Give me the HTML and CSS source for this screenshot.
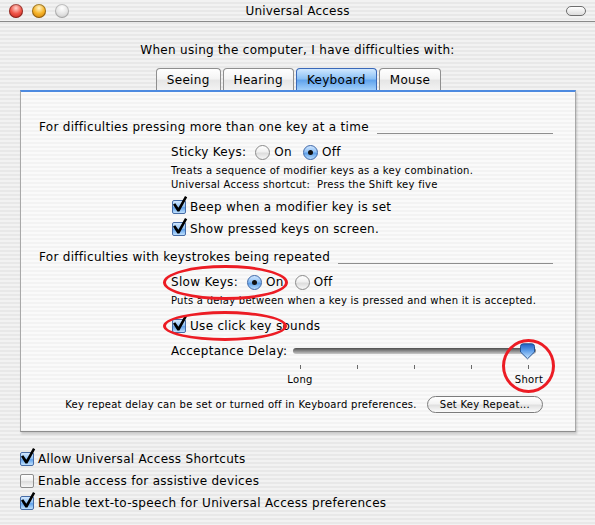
FILE: index.html
```html
<!DOCTYPE html>
<html>
<head>
<meta charset="utf-8">
<title>Universal Access</title>
<link rel="stylesheet" href="styles.css">
</head>
<body>
<div class="window">
  <div class="titlebar">
    <div class="lights">
      <span class="light red"></span>
      <span class="light yellow"></span>
      <span class="light off"></span>
    </div>
    <div class="title">Universal Access</div>
    <div class="pill-wrap"><span class="pill"></span></div>
  </div>

  <p class="intro">When using the computer, I have difficulties with:</p>

  <div class="tabs">
    <div class="tab">Seeing</div>
    <div class="tab">Hearing</div>
    <div class="tab selected">Keyboard</div>
    <div class="tab">Mouse</div>
  </div>

  <div class="panel">
    <div class="group-head"><span>For difficulties pressing more than one key at a time</span><span class="rule"></span></div>
    <div class="indent">
      <div class="opt radio-row first">
        <span class="rlabel">Sticky Keys:</span>
        <span class="rb"></span><span class="rtext">On</span>
        <span class="rb checked"></span><span class="rtext">Off</span>
      </div>
      <div class="note">Treats a sequence of modifier keys as a key combination.<br>Universal Access shortcut:&nbsp; Press the Shift key five</div>
      <div class="opt check-row beep"><span class="cb checked"><svg class="tick" viewBox="0 0 18 19"><path d="M2 9.4 L4.3 8.2 L7.4 12.8 L14 1 L16.2 2.2 L8.4 16.6 L6.4 16.6 Z"/></svg></span><span>Beep when a modifier key is set</span></div>
      <div class="opt check-row show"><span class="cb checked"><svg class="tick" viewBox="0 0 18 19"><path d="M2 9.4 L4.3 8.2 L7.4 12.8 L14 1 L16.2 2.2 L8.4 16.6 L6.4 16.6 Z"/></svg></span><span>Show pressed keys on screen.</span></div>
    </div>

    <div class="group-head second"><span>For difficulties with keystrokes being repeated</span><span class="rule"></span></div>
    <div class="indent">
      <div class="opt radio-row first">
        <span class="rlabel">Slow Keys:</span>
        <span class="rb checked"></span><span class="rtext">On</span>
        <span class="rb"></span><span class="rtext">Off</span>
      </div>
      <div class="note single">Puts a delay between when a key is pressed and when it is accepted.</div>
      <div class="opt check-row click"><span class="cb checked"><svg class="tick" viewBox="0 0 18 19"><path d="M2 9.4 L4.3 8.2 L7.4 12.8 L14 1 L16.2 2.2 L8.4 16.6 L6.4 16.6 Z"/></svg></span><span>Use click key sounds</span></div>
      <div class="acc-row">
        <span class="acc-label">Acceptance Delay:</span>
        <div class="slider">
          <div class="track"></div>
          <svg class="thumb" viewBox="0 0 17 17">
            <defs>
              <linearGradient id="tg" x1="0" y1="0" x2="0" y2="1">
                <stop offset="0" stop-color="#1f5fc4"/>
                <stop offset="0.45" stop-color="#5c9ce8"/>
                <stop offset="1" stop-color="#c8e6ff"/>
              </linearGradient>
            </defs>
            <path d="M1.5 3.5 Q1.5 0.8 4.2 0.8 H12.8 Q15.5 0.8 15.5 3.5 V9 L8.5 15.8 L1.5 9 Z" fill="url(#tg)" stroke="#24508f" stroke-width="1"/>
          </svg>
          <div class="ticks"><i></i><i></i><i></i><i></i><i></i></div>
          <div class="ends"><span>Long</span><span>Short</span></div>
        </div>
      </div>
    </div>
    <div class="repeat-row">
      <span class="small">Key repeat delay can be set or turned off in Keyboard preferences.</span>
      <span class="button">Set Key Repeat...</span>
    </div>
  </div>

  <div class="bottom">
    <div class="opt check-row"><span class="cb checked"><svg class="tick" viewBox="0 0 18 19"><path d="M2 9.4 L4.3 8.2 L7.4 12.8 L14 1 L16.2 2.2 L8.4 16.6 L6.4 16.6 Z"/></svg></span><span>Allow Universal Access Shortcuts</span></div>
    <div class="opt check-row"><span class="cb"></span><span>Enable access for assistive devices</span></div>
    <div class="opt check-row"><span class="cb checked"><svg class="tick" viewBox="0 0 18 19"><path d="M2 9.4 L4.3 8.2 L7.4 12.8 L14 1 L16.2 2.2 L8.4 16.6 L6.4 16.6 Z"/></svg></span><span>Enable text-to-speech for Universal Access preferences</span></div>
  </div>

  <span class="mark mark-slow"></span>
  <span class="mark mark-click"></span>
  <span class="mark mark-thumb"></span>
</div>
</body>
</html>
```

FILE: styles.css
```css
* { box-sizing: border-box; }
html, body { margin: 0; padding: 0; }
body {
  width: 595px;
  height: 525px;
  overflow: hidden;
  font-family: "DejaVu Sans", "Noto Sans", sans-serif;
  font-size: 12px;
  letter-spacing: 0.3px;
  color: #000;
  background: repeating-linear-gradient(to bottom, #f2f2f2 0, #f2f2f2 2px, #e8e8e8 2px, #e8e8e8 4px);
}
.window { position: relative; width: 595px; height: 525px; }

/* title bar */
.titlebar {
  height: 22px;
  display: grid;
  grid-template-columns: 1fr auto 1fr;
  align-items: center;
  border-bottom: 1px solid #8a8a8a;
}
.lights { display: flex; gap: 9px; padding-left: 9px; }
.light {
  width: 14px; height: 14px; border-radius: 50%;
  box-shadow: inset 0 0 0 1px rgba(0,0,0,0.35);
}
.light.red { background: radial-gradient(circle at 50% 30%, #ffd3cc 0, #f0564a 45%, #b8150d 100%); }
.light.yellow { background: radial-gradient(circle at 50% 30%, #fff4c8 0, #f7b52a 45%, #c26d00 100%); }
.light.off { background: radial-gradient(circle at 50% 30%, #ffffff 0, #e4e4e4 50%, #b8b8b8 100%); box-shadow: inset 0 0 0 1px rgba(0,0,0,0.2); }
.title { font-size: 12px; letter-spacing: 0.2px; }
.pill-wrap { display: flex; justify-content: flex-end; padding-right: 9px; }
.pill {
  width: 20px; height: 10px; border-radius: 5px;
  border: 1px solid #6e6e6e;
  background: linear-gradient(#ffffff, #dcdcdc);
}

.intro {
  margin: 20px 0 0;
  text-align: center;
  line-height: 16px;
}

/* tabs */
.tabs {
  margin-top: 10px;
  display: flex;
  justify-content: center;
  gap: 2px;
  padding-left: 2px;
}
.tab {
  height: 22px;
  padding: 0 10px;
  display: flex;
  align-items: center;
  border: 1px solid #8f8f8f;
  border-bottom: none;
  border-radius: 4px 4px 0 0;
  background: linear-gradient(#ffffff 0, #f4f4f4 45%, #e6e6e6 55%, #f2f2f2 100%);
}
.tab.selected {
  border-color: #3a68b8;
  background: linear-gradient(#d0e8ff 0, #8ec2f5 45%, #62a4ec 55%, #a2d0fb 100%);
}

/* panel */
.panel {
  margin: 0 19px 0 20px;
  padding: 27px 22px 18px 18px;
  border-top: 2px solid #4d8ae0;
  border-left: 1px solid #a8a8a8;
  border-right: 1px solid #a8a8a8;
  border-bottom: 1px solid #8d8d8d;
  box-shadow: 1px 2px 2px rgba(0,0,0,0.18);
  background: repeating-linear-gradient(to bottom, #fafafa 0, #fafafa 2px, #f3f3f3 2px, #f3f3f3 4px);
}
.group-head {
  display: flex;
  height: 16px;
  align-items: center;
  gap: 8px;
}
.group-head.second { margin-top: 11px; }
.group-head .rule {
  flex: 1;
  height: 1px;
  background: #8e8e8e;
  align-self: flex-end;
  margin-bottom: 1px;
}
.indent { margin-left: 132px; }

.opt { display: flex; align-items: center; height: 18px; }
.radio-row.first { margin-top: 8px; }
.rlabel { margin-right: 9px; }
.rb {
  width: 15px; height: 15px; border-radius: 50%;
  border: 1px solid #8a8a8a;
  background: linear-gradient(#ffffff 0, #f0f0f0 45%, #dddddd 55%, #f6f6f6 100%);
  display: inline-flex; align-items: center; justify-content: center;
  margin-right: 4px;
}
.rb.checked {
  border-color: #3f68a8;
  background: linear-gradient(#cfe6ff 0, #8fc0f4 45%, #5e9fe8 55%, #b8dcfc 100%);
}
.rb.checked::after {
  content: "";
  width: 5px; height: 5px; border-radius: 50%;
  background: #111;
}
.rtext { margin-right: 11px; }

.note {
  margin-top: 3px;
  font-size: 10px;
  letter-spacing: 0.27px;
  line-height: 14px;
}
.note.single { margin-top: 3px; }

.check-row .cb { margin-left: 1px; margin-right: 4px; }
.cb {
  position: relative;
  width: 14px; height: 14px;
  border-radius: 2px;
  border: 1px solid #8d8d8d;
  background: linear-gradient(#ffffff 0, #f0f0f0 45%, #dcdcdc 55%, #f7f7f7 100%);
  flex: none;
}
.cb.checked {
  border-color: #466ca6;
  background: linear-gradient(#d2e8ff 0, #92c3f5 45%, #62a2ea 55%, #bfe0fd 100%);
}
.tick {
  position: absolute;
  left: -2px; top: -6px;
  width: 18px; height: 19px;
  fill: #000;
}
.beep { margin-top: 6px; }
.show { margin-top: 4px; }
.click { margin-top: 9px; }

/* slider */
.acc-row { display: flex; align-items: flex-start; margin-top: 7px; }
.acc-label { width: 122px; line-height: 18px; }
.slider { position: relative; width: 243px; }
.track {
  margin-top: 6px;
  height: 6px;
  border-radius: 3px;
  background: linear-gradient(#4e4e4e, #8a8a8a 50%, #c8c8c8);
}
.thumb {
  position: absolute;
  left: 226px; top: 1px;
  width: 17px; height: 17px;
}
.ticks {
  margin-top: 11px;
  height: 4px;
  display: flex;
  justify-content: space-between;
  padding: 0 7px;
}
.ticks i { width: 1px; height: 4px; background: #6a6a6a; }
.ends {
  margin: 4px -13px 0 -13px;
  display: flex;
  justify-content: space-between;
  font-size: 10px;
  line-height: 14px;
}
.ends span { width: 40px; text-align: center; }

.repeat-row {
  margin-top: 9px;
  margin-right: 10px;
  height: 17px;
  display: flex;
  align-items: center;
  justify-content: flex-end;
  gap: 10px;
}
.small { font-size: 10px; letter-spacing: 0.27px; }
.button {
  height: 17px;
  padding: 0 12px;
  display: flex;
  align-items: center;
  font-size: 10px;
  letter-spacing: 0.27px;
  border: 1px solid #7c7c7c;
  border-radius: 9px;
  background: linear-gradient(#ffffff 0, #f3f3f3 45%, #e0e0e0 55%, #fbfbfb 100%);
}

/* bottom */
.bottom {
  margin: 18px 0 0 19px;
  display: flex;
  flex-direction: column;
  gap: 4px;
}

/* red annotation marks */
.mark {
  position: absolute;
  border: 3px solid #ec1c24;
  border-radius: 50%;
}
.mark-slow { left: 163px; top: 265px; width: 125px; height: 35px; }
.mark-click { left: 163px; top: 311px; width: 124px; height: 30px; }
.mark-thumb { left: 502px; top: 339px; width: 53px; height: 54px; }
```
